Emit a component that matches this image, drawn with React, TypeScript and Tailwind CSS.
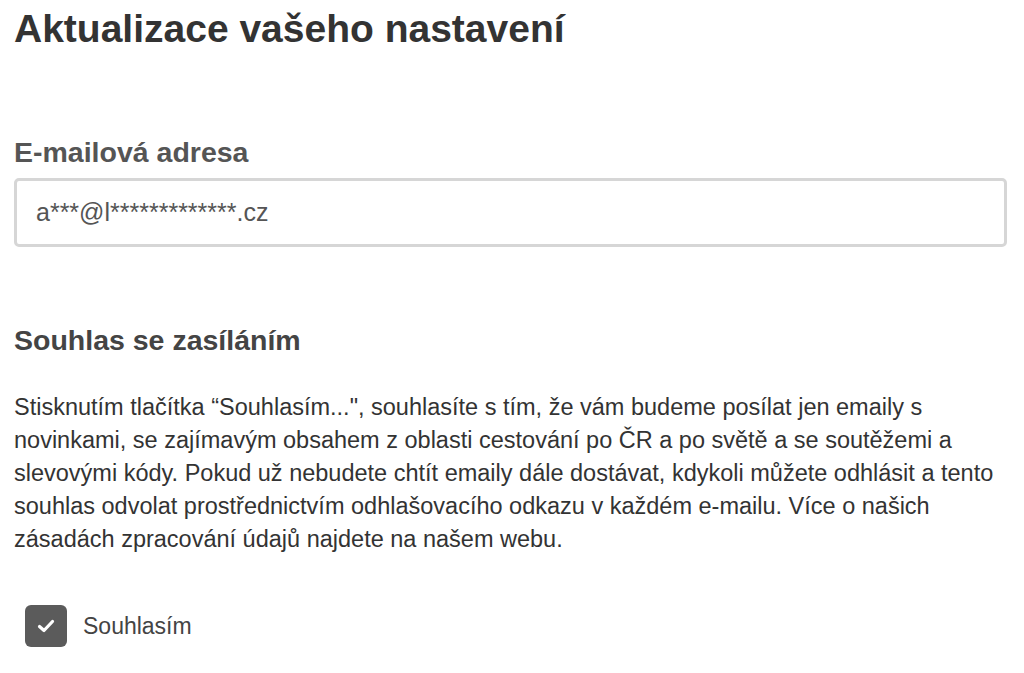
export default function App() {
  return (
    <div className="min-h-[673px] bg-white pl-[14px] pr-[10px] font-['Liberation_Sans',Arial,sans-serif]">
      <h1 className="pt-[5px] text-[39px] font-bold leading-[48px] text-[#333]">
        Aktualizace vašeho nastavení
      </h1>

      <label className="mt-[82px] block text-[28.5px] font-bold leading-[34px] text-[#555]">
        E-mailová adresa
      </label>
      <div className="mt-[9px] mr-[7px] flex h-[69px] items-center rounded-[5px] border-[3px] border-[#d6d6d6] px-[19px] text-[25px] text-[#555]">
        a***@l*************.cz
      </div>

      <h2 className="mt-[76px] text-[28.5px] font-bold leading-[34px] text-[#444]">
        Souhlas se zasíláním
      </h2>
      <p className="mt-[34px] text-[23.5px] leading-[33px] text-[#333]">
        Stisknutím tlačítka “Souhlasím...", souhlasíte s tím, že vám budeme posílat jen emaily s
        novinkami, se zajímavým obsahem z oblasti cestování po ČR a po světě a se soutěžemi a
        slevovými kódy. Pokud už nebudete chtít emaily dále dostávat, kdykoli můžete odhlásit a tento
        souhlas odvolat prostřednictvím odhlašovacího odkazu v každém e-mailu. Více o našich
        zásadách zpracování údajů najdete na našem webu.
      </p>

      <label className="mt-[49px] ml-[11px] flex items-center gap-[16px]">
        <span className="flex h-[42px] w-[42px] items-center justify-center rounded-[6px] bg-[#5b5b5b]">
          <svg width="18" height="14" viewBox="0 0 18 14" fill="none">
            <path d="M2.5 7.5 L7 11.5 L15.5 2.5" stroke="white" strokeWidth="3.2" strokeLinecap="round" strokeLinejoin="round" />
          </svg>
        </span>
        <span className="text-[23px] text-[#444]">Souhlasím</span>
      </label>
    </div>
  );
}
